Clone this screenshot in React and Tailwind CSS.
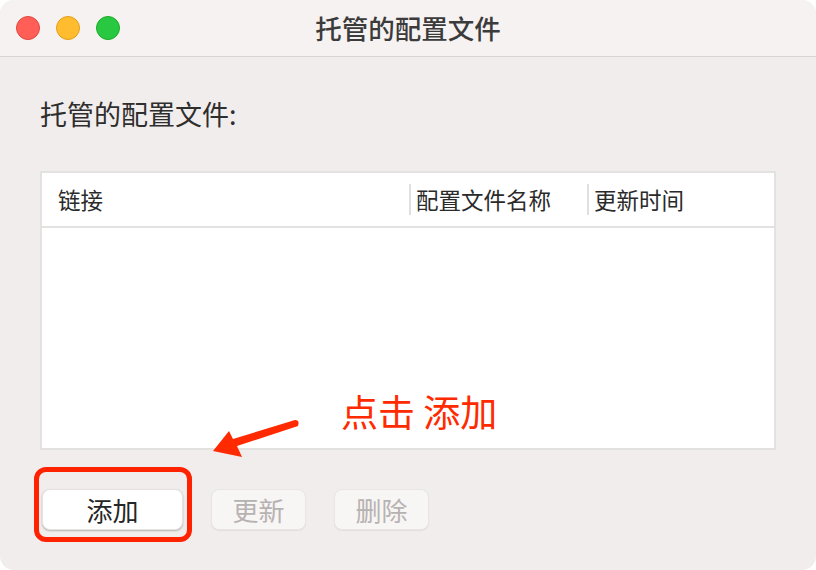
import React from "react";

const cjk = "font-['Noto_Sans_CJK_SC','Noto_Sans_CJK_JP',sans-serif]";

const columns = [
  { label: "链接", sep: false },
  { label: "配置文件名称", sep: true },
  { label: "更新时间", sep: true },
];

function TrafficLights() {
  return (
    <div className="flex items-center gap-4 pl-4">
      <span className="w-6 h-6 rounded-full bg-[#ff5f57] border border-[#e2463f]" />
      <span className="w-6 h-6 rounded-full bg-[#febc2e] border border-[#e1a116]" />
      <span className="w-6 h-6 rounded-full bg-[#28c840] border border-[#1aab29]" />
    </div>
  );
}

export default function App() {
  return (
    <div className={`w-[816px] h-[570px] bg-white ${cjk}`}>
      <div className="relative w-full h-full rounded-[14px] overflow-hidden bg-[#f2eded] flex flex-col">
        {/* title bar */}
        <div className="relative h-[57px] shrink-0 bg-[#f7f2f2] border-b border-[#d9d4d4] flex items-center">
          <TrafficLights />
          <div className="absolute inset-0 flex items-center justify-center text-[26.5px] font-medium text-[#3b3b3b]">
            托管的配置文件
          </div>
        </div>

        {/* body */}
        <div className="flex flex-col px-[40px] pt-[40px]">
          <div className="text-[27px] leading-[34px] text-[#2e2e2e]">托管的配置文件:</div>

          <div className="mt-[40px] h-[279px] bg-white border-2 border-[#e4e1e1] flex flex-col">
            <div className="h-[55px] border-b-2 border-[#e4e1e1] grid grid-cols-[367px_178px_1fr]">
              {columns.map((c) => (
                <div key={c.label} className="flex items-center">
                  {c.sep && <span className="w-[2px] h-[31px] bg-[#e2dfdf]" />}
                  <span className={`text-[22.5px] text-[#2a2a2a] ${c.sep ? "pl-[5px]" : "pl-[16px]"}`}>
                    {c.label}
                  </span>
                </div>
              ))}
            </div>
            <div className="flex-1" />
          </div>

          <div className="mt-[39px] flex items-center gap-[28px] pl-[2px]">
            <button className="w-[141px] h-[41px] rounded-[8px] bg-white shadow-[0_1px_2px_rgba(0,0,0,0.25)] border border-[#e6e2e2] text-[26px] text-[#262626] flex items-center justify-center">
              添加
            </button>
            <button className="w-[95px] h-[41px] rounded-[8px] bg-[#f8f5f5] border border-[#e9e5e5] shadow-[0_1px_1px_rgba(0,0,0,0.06)] text-[26px] text-[#b7b2b2] flex items-center justify-center">
              更新
            </button>
            <button className="w-[95px] h-[41px] rounded-[8px] bg-[#f8f5f5] border border-[#e9e5e5] shadow-[0_1px_1px_rgba(0,0,0,0.06)] text-[26px] text-[#b7b2b2] flex items-center justify-center">
              删除
            </button>
          </div>
        </div>

        {/* annotation overlay */}
        <div className="absolute left-[341px] top-[388px] text-[37px] leading-[46px] text-[#ff2a00] whitespace-nowrap">
          点击 添加
        </div>
        <div className="absolute left-[34px] top-[467px] w-[158px] h-[75px] rounded-[12px] border-[5px] border-[#ff2200]" />
        <svg className="absolute inset-0 pointer-events-none" width="816" height="570" viewBox="0 0 816 570">
          <path
            d="M213 451 L229 431 L233 439 L295 420 Q300 420 298 426 L237 446 L242 457 Z"
            fill="#ff2a00"
          />
        </svg>
      </div>
    </div>
  );
}
